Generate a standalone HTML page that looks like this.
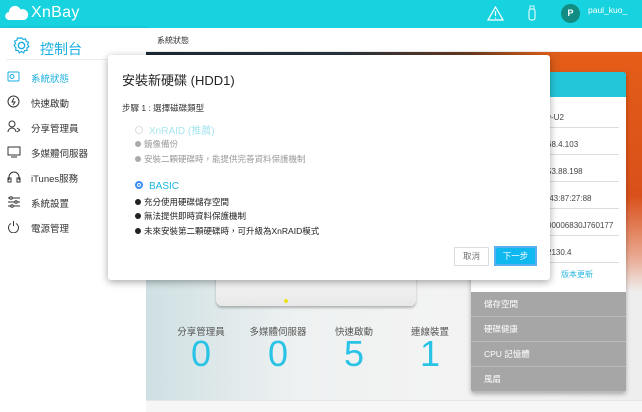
<!DOCTYPE html>
<html><head><meta charset="utf-8"><style>
*{margin:0;padding:0;box-sizing:border-box}
body{width:642px;height:412px;overflow:hidden;font-family:"Liberation Sans","Noto Sans CJK TC",sans-serif;background:#fff;position:relative}
.hdr{position:absolute;left:0;top:0;width:642px;height:28px;background:#17d3df}
.side{position:absolute;left:0;top:28px;width:146px;height:384px;background:#fff;box-shadow:1px 0 3px rgba(0,0,0,.15)}
.side .t{position:absolute;left:40px;top:11px;font-size:14px;color:#1aaee0}
.nav{position:absolute;left:31px;font-size:9.5px;color:#333}
.bg{position:absolute;left:146px;top:52px;width:496px;height:360px;background:linear-gradient(90deg,#cfe0e3 0%,#eef1f1 30%,#f3f3f3 60%,#eeeeee 100%)}
.space{position:absolute;left:146px;top:52px;width:496px;height:60px;background:linear-gradient(90deg,#1d2a35 0%,#2a3440 40%,#6a3a20 65%,#e0601a 80%,#d54712 100%)}
.orange{position:absolute;left:560px;top:52px;width:82px;height:240px;background:linear-gradient(180deg,#e55d18,#d9501a 60%,rgba(230,120,80,.6) 85%,rgba(240,240,240,0))}
.modal{position:absolute;left:108px;top:55px;width:442px;height:225px;background:#fff;border-radius:3px;box-shadow:0 2px 8px rgba(0,0,0,.35)}
.m{position:absolute;font-size:8.5px;white-space:nowrap}
.dot{display:inline-block;width:6px;height:6px;border-radius:50%;margin-right:3px;vertical-align:0px}
.panel{position:absolute;left:471px;top:72px;width:155px;height:320px;border-radius:3px;box-shadow:0 2px 5px rgba(0,0,0,.3);background:#a6a6a6;overflow:hidden}
.ph{height:25px;background:#23c6d8}
.pw{height:195px;background:#fff;position:relative}
.pr{position:absolute;left:0;width:148px;font-size:8px;color:#444;border-bottom:1px solid #ddd;height:27px}
.g{height:25px;border-bottom:1px solid #bbb;color:#fff;font-size:8.5px;padding:6px 0 0 13px}
.st{position:absolute;top:324px;font-size:9.5px;color:#555;text-align:center;width:80px}
.num{position:absolute;top:333px;font-size:36px;color:#29c3e6;text-align:center;width:80px;font-weight:300}
</style></head><body>
<div class="hdr">
<svg style="position:absolute;left:5px;top:5px" width="24" height="16" viewBox="0 0 24 16"><path d="M4.5 15a4 4 0 0 1-.5-8a6 6 0 0 1 11.5-2.5a5 5 0 0 1 4 10.5z" fill="#fff"/></svg>
<div style="position:absolute;left:31px;top:4px;font-size:16px;color:#fff;letter-spacing:.3px">XnBay</div>
<svg style="position:absolute;left:487px;top:6px" width="17" height="15" viewBox="0 0 17 15"><path d="M8.5 1L16 14H1z" fill="none" stroke="#fff" stroke-width="1.2"/><path d="M8.5 5v5M8.5 11.5v1" stroke="#fff" stroke-width="1.2"/></svg>
<svg style="position:absolute;left:528px;top:5px" width="8" height="16" viewBox="0 0 8 16"><rect x="1" y="4" width="6" height="11" rx="2" fill="none" stroke="#fff"/><rect x="2" y="1" width="4" height="3" fill="none" stroke="#fff" stroke-width=".8"/></svg>
<div style="position:absolute;left:561px;top:4px;width:19px;height:19px;border-radius:50%;background:#138c84;color:#fff;font-size:9px;font-weight:bold;text-align:center;line-height:19px">P</div>
<div style="position:absolute;left:588px;top:5px;font-size:8.5px;color:#fff">paul_kuo_</div>
</div>
<div class="side">
<svg style="position:absolute;left:12px;top:8px" width="19" height="19" viewBox="0 0 18 18"><circle cx="9" cy="9" r="3" fill="none" stroke="#1aaee0" stroke-width="1.3"/><path d="M9 1.5l1.5 1.8 2.3-.6.6 2.3 2.2.9-.9 2.2 1.3 1.9-1.9 1.2.3 2.4-2.4.2-1 2.2L9 14.6 6.9 16l-1-2.2-2.4-.2.3-2.4L2 9l1.3-1.9-.9-2.2 2.2-.9.6-2.3 2.3.6z" fill="none" stroke="#1aaee0" stroke-width="1.1"/></svg>
<div class="t">控制台</div>
<div style="position:absolute;left:6px;top:31px;width:140px;border-top:1px solid #eee"></div>
</div>
<div class="nav" style="top:71px;color:#1aaee0">系統狀態</div>
<div class="nav" style="top:96px">快速啟動</div>
<div class="nav" style="top:121px">分享管理員</div>
<div class="nav" style="top:146px">多媒體伺服器</div>
<div class="nav" style="top:171px">iTunes服務</div>
<div class="nav" style="top:196px">系統設置</div>
<div class="nav" style="top:221px">電源管理</div>
<svg style="position:absolute;left:7px;top:71px" width="13" height="11"><rect x="1" y="1" width="11" height="9" rx="1" fill="none" stroke="#1aaee0"/><circle cx="5" cy="5.5" r="2" fill="none" stroke="#1aaee0"/></svg>
<svg style="position:absolute;left:7px;top:95px" width="13" height="13"><circle cx="6.5" cy="6.5" r="5.5" fill="none" stroke="#333"/><path d="M7 3L5 7h3L6 10" fill="none" stroke="#333"/></svg>
<svg style="position:absolute;left:7px;top:120px" width="14" height="13"><circle cx="5" cy="4" r="3" fill="none" stroke="#333"/><path d="M1 12a4 4 0 0 1 8 0M10 8l3 2M10 12l3-2" fill="none" stroke="#333"/></svg>
<svg style="position:absolute;left:7px;top:146px" width="14" height="12"><rect x="1" y="1" width="12" height="8" fill="none" stroke="#333"/><path d="M4 11h6" stroke="#333"/></svg>
<svg style="position:absolute;left:7px;top:170px" width="14" height="13"><path d="M2 10V7a5 5 0 0 1 10 0v3" fill="none" stroke="#333"/><rect x="1" y="8" width="3" height="4" fill="none" stroke="#333"/><rect x="10" y="8" width="3" height="4" fill="none" stroke="#333"/></svg>
<svg style="position:absolute;left:7px;top:196px" width="14" height="12"><path d="M1 2h12M1 6h12M1 10h12" stroke="#333"/><circle cx="4" cy="2" r="1.3" fill="#fff" stroke="#333"/><circle cx="9" cy="6" r="1.3" fill="#fff" stroke="#333"/><circle cx="5" cy="10" r="1.3" fill="#fff" stroke="#333"/></svg>
<svg style="position:absolute;left:7px;top:220px" width="13" height="13"><path d="M4 3.5a5 5 0 1 0 5 0" fill="none" stroke="#333"/><path d="M6.5 1v5" stroke="#333"/></svg>
<div style="position:absolute;left:146px;top:28px;width:496px;height:24px;background:#fff;border-bottom:1px solid #eee"></div>
<div style="position:absolute;left:157px;top:35px;font-size:8px;color:#333">系統狀態</div>
<div class="bg"></div>
<div class="space"></div>
<div class="orange"></div>
<div style="position:absolute;left:216px;top:270px;width:200px;height:36px;background:linear-gradient(#fafafa,#e8e8e8);border-radius:0 0 6px 6px;box-shadow:0 2px 2px rgba(0,0,0,.25)"></div>
<div style="position:absolute;left:284px;top:299px;width:4px;height:4px;border-radius:50%;background:#e8e020"></div>
<div class="st" style="left:161px">分享管理員</div><div class="num" style="left:161px">0</div>
<div class="st" style="left:238px">多媒體伺服器</div><div class="num" style="left:238px">0</div>
<div class="st" style="left:314px">快速啟動</div><div class="num" style="left:314px">5</div>
<div class="st" style="left:390px">連線裝置</div><div class="num" style="left:390px">1</div>
<div style="position:absolute;left:146px;top:400px;width:496px;height:12px;background:#f6f6f6;border-top:1px solid #e6e6e6"></div>
<div class="panel">
<div class="ph"></div>
<div class="pw">
<div class="pr" style="top:4px"><span style="position:absolute;left:76px;top:12px">y-U2</span></div>
<div class="pr" style="top:31px"><span style="position:absolute;left:76px;top:12px">68.4.103</span></div>
<div class="pr" style="top:58px"><span style="position:absolute;left:76px;top:12px">53.88.198</span></div>
<div class="pr" style="top:85px"><span style="position:absolute;left:76px;top:12px">:43:87:27:88</span></div>
<div class="pr" style="top:112px"><span style="position:absolute;left:76px;top:12px">00006830J760177</span></div>
<div class="pr" style="top:139px"><span style="position:absolute;left:76px;top:12px">2130.4</span></div>
<span style="position:absolute;left:90px;top:172px;font-size:8px;color:#29b6e0">版本更新</span>
</div>
<div class="g">儲存空間</div><div class="g">硬碟健康</div><div class="g">CPU 記憶體</div><div class="g">風扇</div>
</div>
<div class="modal">
<div class="m" style="left:14px;top:15px;font-size:13px;color:#222">安裝新硬碟 (HDD1)</div>
<div class="m" style="left:14px;top:47px;color:#333">步驟 1 : 選擇磁碟類型</div>
<div class="m" style="left:27px;top:67px;font-size:10px;color:#a8e4ef"><span style="display:inline-block;width:8px;height:8px;border:1px solid #ddd;border-radius:50%;margin-right:6px"></span>XnRAID (推薦)</div>
<div class="m" style="left:27px;top:83px;color:#999"><span class="dot" style="background:#aaa"></span>鏡像備份</div>
<div class="m" style="left:27px;top:98px;color:#999"><span class="dot" style="background:#aaa"></span>安裝二顆硬碟時，能提供完善資料保護機制</div>
<div class="m" style="left:27px;top:126px;font-size:10px;color:#1ab8e0"><span style="display:inline-block;width:8px;height:8px;border:2px solid #3a8cf0;border-radius:50%;margin-right:6px;background:#fff;box-shadow:inset 0 0 0 1px #fff,inset 0 0 0 3px #3a8cf0"></span>BASIC</div>
<div class="m" style="left:27px;top:141px;color:#222"><span class="dot" style="background:#222"></span>充分使用硬碟儲存空間</div>
<div class="m" style="left:27px;top:155px;color:#222"><span class="dot" style="background:#222"></span>無法提供即時資料保護機制</div>
<div class="m" style="left:27px;top:170px;color:#222"><span class="dot" style="background:#222"></span>未來安裝第二顆硬碟時，可升級為XnRAID模式</div>
<div style="position:absolute;left:346px;top:192px;width:35px;height:19px;border:1px solid #ddd;font-size:8.5px;color:#777;text-align:center;line-height:17px">取消</div>
<div style="position:absolute;left:386px;top:191px;width:43px;height:20px;border:2px solid #5ab0ee;background:#10b8f0;font-size:8.5px;color:#fff;text-align:center;line-height:16px">下一步</div>
</div>
</body></html>
